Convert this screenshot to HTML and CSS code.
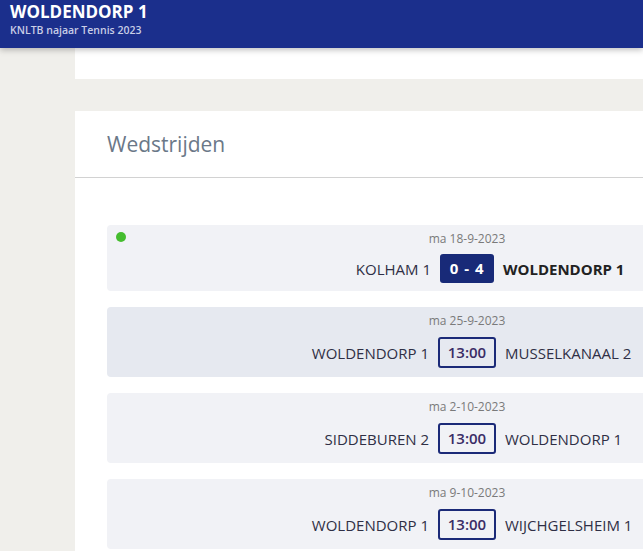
FILE: index.html
```html
<!DOCTYPE html>
<html lang="en">
<head>
    <meta charset="UTF-8">
    <meta name="viewport" content="width=device-width, initial-scale=1.0">
    <title>Woldendorp 1</title>
    <link rel="stylesheet" href="styles.css">
</head>
<body>
    <header class="topbar">
        <div class="team-title">WOLDENDORP 1</div>
        <div class="team-sub">KNLTB najaar Tennis 2023</div>
    </header>

    <div class="layout">
        <aside class="sidebar"></aside>
        <main class="content">
            <div class="strip"></div>

            <section class="card">
                <div class="card-head">
                    <h2>Wedstrijden</h2>
                </div>
                <div class="card-body">
                    <div class="match">
                        <span class="live-dot"></span>
                        <div class="date">ma 18-9-2023</div>
                        <div class="teams">
                            <span class="home">KOLHAM 1</span>
                            <span class="score">0 - 4</span>
                            <span class="away winner">WOLDENDORP 1</span>
                        </div>
                    </div>
                    <div class="match active">
                        <div class="date">ma 25-9-2023</div>
                        <div class="teams">
                            <span class="home">WOLDENDORP 1</span>
                            <span class="time">13:00</span>
                            <span class="away">MUSSELKANAAL 2</span>
                        </div>
                    </div>
                    <div class="match">
                        <div class="date">ma 2-10-2023</div>
                        <div class="teams">
                            <span class="home">SIDDEBUREN 2</span>
                            <span class="time">13:00</span>
                            <span class="away">WOLDENDORP 1</span>
                        </div>
                    </div>
                    <div class="match">
                        <div class="date">ma 9-10-2023</div>
                        <div class="teams">
                            <span class="home">WOLDENDORP 1</span>
                            <span class="time">13:00</span>
                            <span class="away">WIJCHGELSHEIM 1</span>
                        </div>
                    </div>
                </div>
            </section>
        </main>
    </div>
</body>
</html>
```

FILE: styles.css
```css
html, body {
    margin: 0;
    padding: 0;
}
body {
    font-family: "Open Sans", Arial, sans-serif;
    background: #f0efeb;
    overflow: hidden;
    height: 551px;
}
.topbar {
    position: relative;
    z-index: 2;
    height: 48px;
    box-sizing: border-box;
    padding: 1px 10px 0;
    background: #1b2f8c;
    color: #fff;
    box-shadow: 0 2px 6px rgba(0, 0, 0, 0.25);
}
.team-title {
    font-size: 17px;
    font-weight: 700;
    line-height: 22px;
}
.team-sub {
    font-size: 10.5px;
    font-weight: 600;
    line-height: 14px;
    color: #c9cde6;
}
.layout {
    display: flex;
}
.sidebar {
    width: 75px;
    flex: none;
}
.content {
    width: 784px;
    flex: none;
}
.strip {
    height: 31px;
    background: #fff;
    margin-bottom: 32px;
}
.card {
    background: #fff;
    min-height: 500px;
}
.card-head {
    height: 66px;
    padding: 0 32px;
    display: flex;
    align-items: center;
    border-bottom: 1px solid #d2d2d2;
}
.card-head h2 {
    margin: 0;
    font-size: 21px;
    font-weight: 400;
    color: #6b7888;
}
.card-body {
    padding: 47px 32px 0;
    display: flex;
    flex-direction: column;
    gap: 16px;
}
.match {
    position: relative;
    background: #f1f2f6;
    border-radius: 4px;
    padding: 6px 0 8px;
}
.match.active {
    background: #e6e9f0;
}
.live-dot {
    position: absolute;
    left: 9px;
    top: 7px;
    width: 10px;
    height: 10px;
    border-radius: 50%;
    background: #45bd2f;
}
.date {
    text-align: center;
    font-size: 12px;
    line-height: 16px;
    color: #7a7a7a;
}
.teams {
    margin-top: 7px;
    display: grid;
    grid-template-columns: 1fr auto 1fr;
    align-items: center;
    column-gap: 9px;
    font-size: 15px;
    color: #2f2f45;
}
.home {
    text-align: right;
}
.away {
    text-align: left;
}
.winner {
    font-weight: 700;
    color: #222;
}
.score {
    width: 54px;
    height: 29px;
    line-height: 29px;
    text-align: center;
    background: #182a78;
    color: #fff;
    font-weight: 700;
    letter-spacing: 0.5px;
    word-spacing: 1px;
    border-radius: 3px;
}
.time {
    width: 54px;
    height: 27px;
    line-height: 27px;
    margin: 1px 0;
    text-align: center;
    border: 2px solid #1b2a78;
    border-radius: 3px;
    color: #3a2c66;
    font-weight: 600;
}
```
